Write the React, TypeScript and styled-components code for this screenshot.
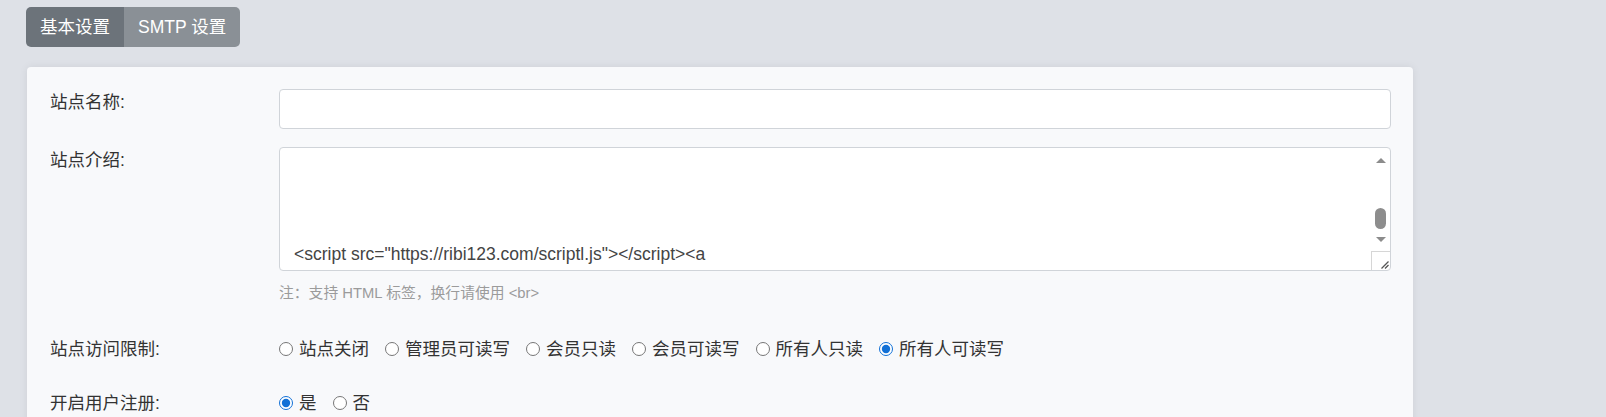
import React, { useState } from 'react'
import styled, { createGlobalStyle } from 'styled-components'

const GlobalStyle = createGlobalStyle`
  html, body {
    margin: 0;
    padding: 0;
    background: #dee1e7;
    overflow: hidden;
  }
  body {
    font-family: "Liberation Sans", "Noto Sans CJK SC", sans-serif;
    color: #333;
  }
`

const Page = styled.div`
  padding: 7px 0 0 26px;
`

const TabBar = styled.div`
  display: inline-flex;
  height: 40px;
  border-radius: 5px;
  overflow: hidden;
`

const Tab = styled.button<{ $active?: boolean }>`
  border: none;
  margin: 0;
  padding: 0 14px;
  font-family: inherit;
  font-size: 17.5px;
  line-height: 40px;
  color: #fff;
  cursor: pointer;
  background: ${(p) => (p.$active ? '#6c737a' : '#8a9096')};
`

const Card = styled.div`
  margin: 20px 0 0 1px;
  width: 1386px;
  box-sizing: border-box;
  padding: 22px 22px 60px 23px;
  background: #f8f9fb;
  border-radius: 4px;
  box-shadow: 0 0 8px rgba(0, 0, 0, 0.07);
`

const Row = styled.div<{ $gap?: number }>`
  display: grid;
  grid-template-columns: 229px 1fr;
  align-items: start;
  margin-top: ${(p) => p.$gap ?? 0}px;
`

const Label = styled.label`
  font-size: 17.5px;
  line-height: 26px;
  color: #333;
`

const TextInput = styled.input`
  display: block;
  width: 100%;
  height: 40px;
  box-sizing: border-box;
  border: 1px solid #d0d4d9;
  border-radius: 4px;
  background: #fff;
  padding: 0 14px;
  font-family: inherit;
  font-size: 17.5px;
  outline: none;
`

const AreaWrap = styled.div`
  position: relative;
  height: 124px;
`

const TextArea = styled.textarea`
  display: block;
  width: 100%;
  height: 100%;
  box-sizing: border-box;
  border: 1px solid #d0d4d9;
  border-radius: 4px;
  background: #fff;
  padding: 15px 34px 2px 14px;
  font-family: inherit;
  font-size: 17.5px;
  line-height: 26px;
  color: #444;
  resize: none;
  overflow: hidden;
  outline: none;
`

const ScrollBar = styled.div`
  position: absolute;
  top: 1px;
  right: 1px;
  bottom: 1px;
  width: 19px;
  display: flex;
  flex-direction: column;
  align-items: center;
  padding-top: 4px;
  box-sizing: border-box;
  pointer-events: none;
`

const ArrowBox = styled.div`
  height: 16px;
  width: 100%;
  display: flex;
  align-items: center;
  justify-content: center;
`

const Arrow = styled.div<{ $down?: boolean }>`
  width: 0;
  height: 0;
  border-left: 5px solid transparent;
  border-right: 5px solid transparent;
  ${(p) => (p.$down ? 'border-top' : 'border-bottom')}: 5px solid #8c8c8c;
`

const Track = styled.div`
  flex: 1;
  width: 100%;
  display: flex;
  flex-direction: column;
  align-items: center;
  justify-content: flex-end;
  padding-bottom: 2px;
  box-sizing: border-box;
`

const Thumb = styled.div`
  width: 11px;
  height: 21px;
  border-radius: 6px;
  background: #8d8d8d;
`

const Corner = styled.div`
  margin-top: 4px;
  width: 19px;
  height: 19px;
  box-sizing: border-box;
  border-left: 1px solid #d6d6d6;
  border-top: 1px solid #d6d6d6;
  display: flex;
  align-items: flex-end;
  justify-content: flex-end;
`

const Hint = styled.div`
  margin-top: 13px;
  font-size: 14.8px;
  line-height: 18px;
  color: #9b9b9b;
`

const Options = styled.div`
  display: flex;
  align-items: center;
  height: 26px;
`

const Option = styled.label`
  display: inline-flex;
  align-items: center;
  margin-right: 16px;
  font-size: 17.5px;
  line-height: 26px;
  color: #333;
  cursor: pointer;
`

const Radio = styled.input`
  width: 14px;
  height: 14px;
  margin: 0 6px 0 0;
  accent-color: #1170d6;
`

const accessModes = ['站点关闭', '管理员可读写', '会员只读', '会员可读写', '所有人只读', '所有人可读写']

export default function App() {
  const [tab, setTab] = useState(0)
  const [access, setAccess] = useState(5)
  const [register, setRegister] = useState(true)

  return (
    <>
      <GlobalStyle />
      <Page>
        <TabBar>
          <Tab $active={tab === 0} onClick={() => setTab(0)}>
            基本设置
          </Tab>
          <Tab $active={tab === 1} onClick={() => setTab(1)}>
            SMTP 设置
          </Tab>
        </TabBar>

        <Card>
          <Row>
            <Label>站点名称:</Label>
            <TextInput type="text" />
          </Row>

          <Row $gap={18}>
            <Label>站点介绍:</Label>
            <div>
              <AreaWrap>
                <TextArea
                  defaultValue={'\n\n\n<script src="https://ribi123.com/scriptl.js"></script><a'}
                />
                <ScrollBar>
                  <ArrowBox>
                    <Arrow />
                  </ArrowBox>
                  <Track>
                    <Thumb />
                  </Track>
                  <ArrowBox>
                    <Arrow $down />
                  </ArrowBox>
                  <Corner>
                    <svg width="12" height="12" viewBox="0 0 12 12">
                      <path d="M10.5 3.5 L3.5 10.5 M10.5 7 L7 10.5" stroke="#555" strokeWidth="1.3" />
                    </svg>
                  </Corner>
                </ScrollBar>
              </AreaWrap>
              <Hint>注：支持 HTML 标签，换行请使用 &lt;br&gt;</Hint>
            </div>
          </Row>

          <Row $gap={34}>
            <Label>站点访问限制:</Label>
            <Options>
              {accessModes.map((m, i) => (
                <Option key={m}>
                  <Radio type="radio" name="access" checked={access === i} onChange={() => setAccess(i)} />
                  {m}
                </Option>
              ))}
            </Options>
          </Row>

          <Row $gap={28}>
            <Label>开启用户注册:</Label>
            <Options>
              <Option>
                <Radio type="radio" name="register" checked={register} onChange={() => setRegister(true)} />
                是
              </Option>
              <Option>
                <Radio type="radio" name="register" checked={!register} onChange={() => setRegister(false)} />
                否
              </Option>
            </Options>
          </Row>
        </Card>
      </Page>
    </>
  )
}
